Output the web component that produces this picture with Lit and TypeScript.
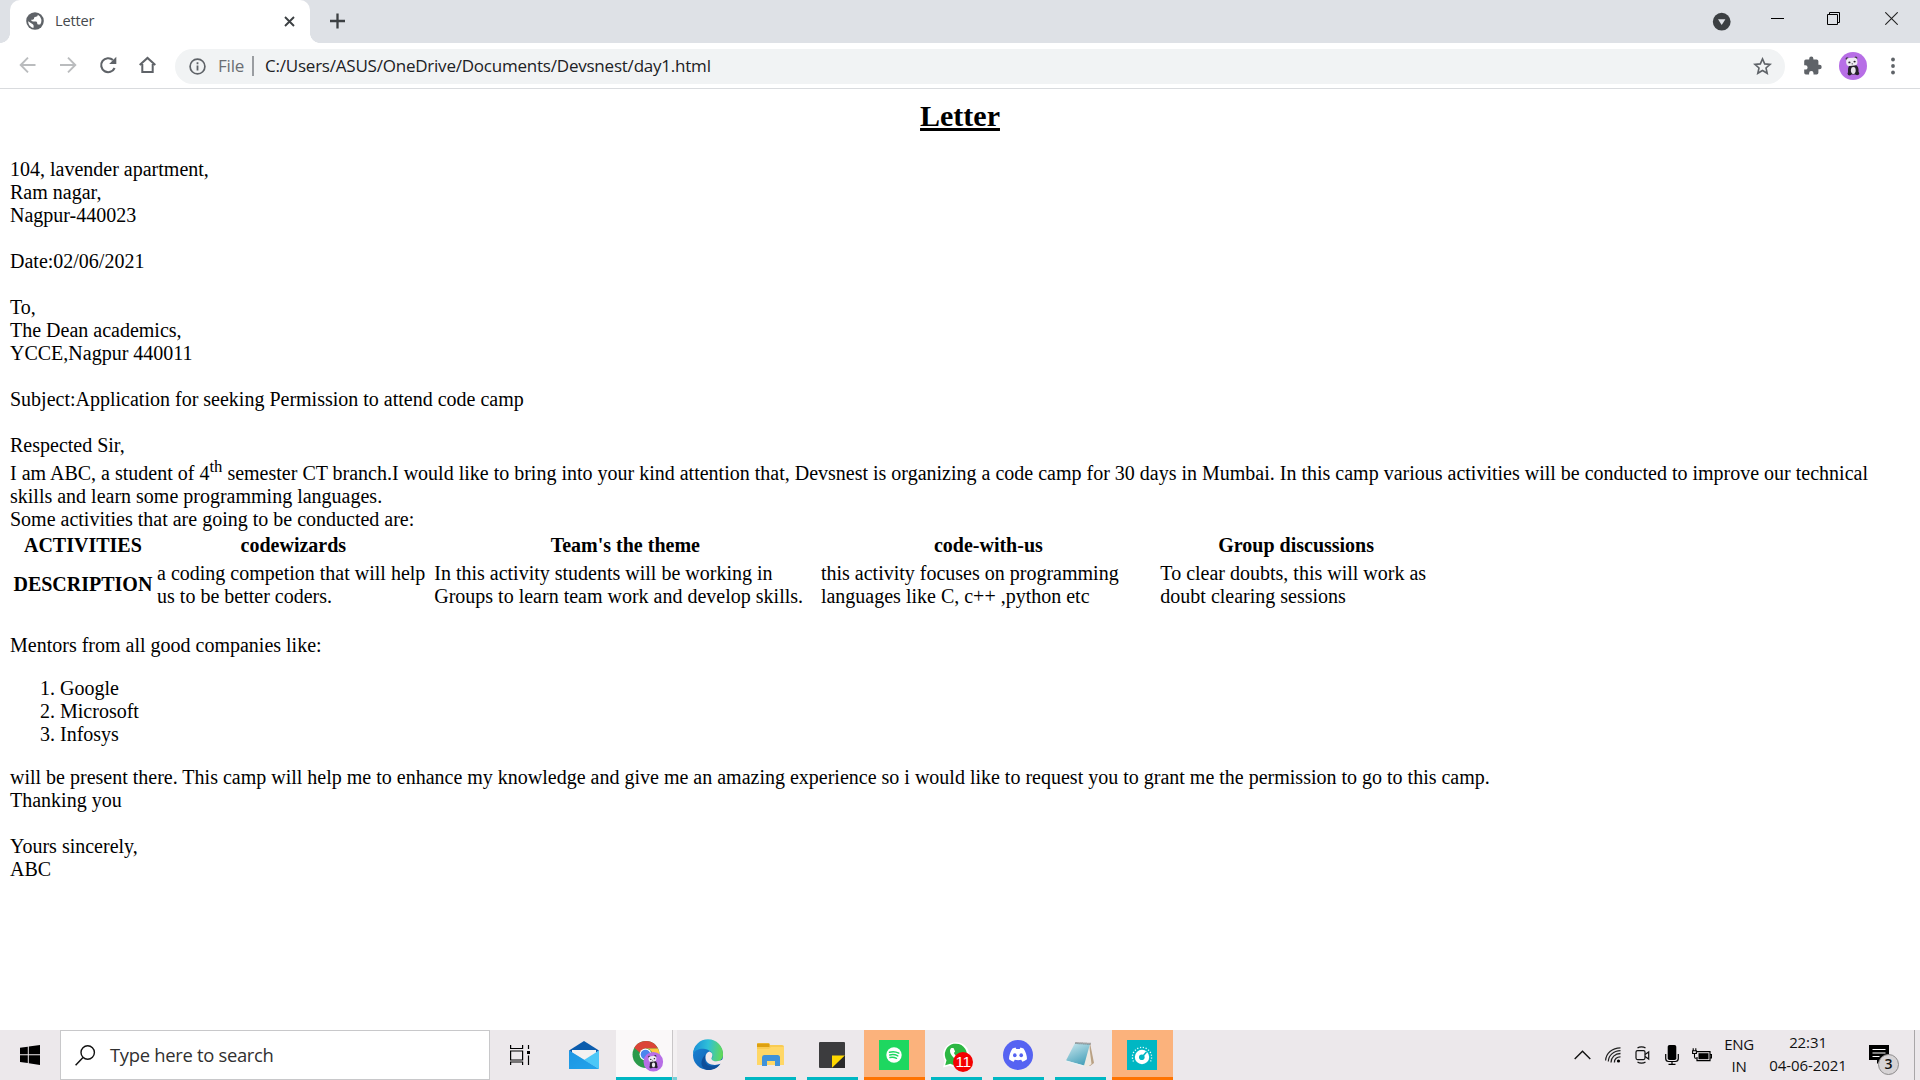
import { LitElement, html, css, svg } from "lit";
import { customElement } from "lit/decorators.js";

const icon = (w: number, h: number, body: unknown) =>
  html`<svg width=${w} height=${h} viewBox="0 0 ${w} ${h}" fill="none">${body}</svg>`;

const panda = svg`
  <circle cx="14" cy="14" r="14" fill="#b76ee6"/>
  <circle cx="8.200" cy="6.800" r="1.600" fill="#3a3340"/><circle cx="16.800" cy="6" r="1.600" fill="#3a3340"/>
  <path d="M9 18c0-3.500 1.500-5.500 5-5.500s5.500 2 5.500 5.500v4.500H9z" fill="#26222b"/>
  <ellipse cx="14.300" cy="18.500" rx="2.400" ry="3.400" fill="#e9e6ee"/>
  <circle cx="10.500" cy="21.500" r="1.900" fill="#26222b"/><circle cx="18.200" cy="21.300" r="1.900" fill="#26222b"/>
  <rect x="7.200" y="5.800" width="11.200" height="8" rx="3.400" fill="#eeebf2" transform="rotate(-5 13 10)"/>
  <ellipse cx="10.400" cy="10.400" rx="1.100" ry=".9" fill="#26222b"/><ellipse cx="15.600" cy="9.600" rx="1.100" ry=".9" fill="#26222b"/>
  <circle cx="13.200" cy="11.800" r=".6" fill="#26222b"/>`;

@customElement("browser-chrome")
export class BrowserChrome extends LitElement {
  static styles = css`
    :host { display: block; font-family: "Open Sans", "Noto Sans", sans-serif; flex: none; }
    svg { display: block; flex: none; }
    .strip { height: 43px; background: #dee1e6; display: flex; align-items: stretch; padding-left: 10px; }
    .tab { position: relative; width: 300px; box-sizing: border-box; background: #fff; border-radius: 10px 10px 0 0;
      display: flex; align-items: center; padding: 0 15px 1px 16px; }
    .tab::before, .tab::after { content: ""; position: absolute; bottom: 0; width: 10px; height: 10px; }
    .tab::before { left: -10px; background: radial-gradient(circle at 0 0, transparent 9.6px, #fff 10.2px); }
    .tab::after { right: -10px; background: radial-gradient(circle at 100% 0, transparent 9.6px, #fff 10.2px); }
    .title { margin-left: 11px; padding-bottom: 2px; font-size: 14.6px; letter-spacing: -0.2px; color: #45494d; flex: 1; }
    .plus { margin: 13px 0 0 20px; }
    .gap { flex: 1; }
    .caption { display: flex; align-items: flex-start; }
    .drop { margin: 12px 39px 0 0; }
    .min { margin: 18px 43px 0 0; }
    .max { margin: 12px 45px 0 0; }
    .close { margin: 12px 22px 0 0; }
    .toolbar { height: 45px; display: flex; align-items: center; padding-left: 19px; border-bottom: 1px solid #d9dbde; }
    .nav { display: flex; align-items: center; gap: 22px; width: 156px; padding-bottom: 1px; }
    .omni { flex: 1; height: 35px; border-radius: 18px; background: #f1f3f4; display: flex; align-items: center;
      padding: 0 13px 0 14px; font-size: 17px; color: #202124; margin-top: 1px; }
    .file { color: #6a6e73; margin-left: 12px; width: 27px; letter-spacing: -0.2px; padding-bottom: 2px; }
    .bar { width: 2px; height: 20px; background: #9a9da1; margin: 0 11px 0 7px; }
    .url { flex: 1; letter-spacing: -0.22px; white-space: nowrap; padding-bottom: 2px; }
    .tools { display: flex; align-items: center; width: 135px; box-sizing: border-box; padding-left: 18px; }
    .avatar { margin: 0 24px 0 16px; }
  `;
  render() {
    return html`
      <div class="strip">
        <div class="tab">
          ${icon(18, 18, svg`<circle cx="9" cy="9" r="8.8" fill="#5f6368"/>
            <path d="M2.2 9.2 6 11.7c1.2.8 1.6 1.1 1.6 2.2v1.9C4.600 15.400 2.100 12.600 2.200 9.200zM11.800 2.700c-.1 1.200-.6 1.900-1.900 2-1.300.1-1.900.7-1.900 1.900 0 .8-.5 1.200-1.400 1.200H5.200c0 1.200.7 1.700 1.900 1.700h2.300c1.200 0 1.800.6 1.800 1.800 0 .9.500 1.300 1.400 1.300h1.600a6.900 6.900 0 0 0-2.400-9.900z" fill="#fff"/>`)}
          <span class="title">Letter</span>
          ${icon(11, 11, svg`<path d="M1 1l9 9M10 1l-9 9" stroke="#3c4043" stroke-width="1.9"/>`)}
        </div>
        <div class="plus">${icon(15, 16, svg`<path d="M7.500 .5v15M0 8h15" stroke="#3c4043" stroke-width="2.300"/>`)}</div>
        <div class="gap"></div>
        <div class="caption">
          <div class="drop">${icon(20, 20, svg`<circle cx="9.700" cy="9.700" r="8.900" fill="#3c4043"/><path d="M6 7.300h7.400L9.700 13z" fill="#dee1e6"/>`)}</div>
          <div class="min">${icon(13, 1, svg`<path d="M0 .5h13" stroke="#000"/>`)}</div>
          <div class="max">${icon(13, 13, svg`<path d="M.5 2.500h10v10H.5zM2.500 2.500V.5h10v10h-2" stroke="#000"/>`)}</div>
          <div class="close">${icon(13, 13, svg`<path d="M.3.3l12.400 12.400M12.700.3L.3 12.700" stroke="#222" stroke-width="1.100"/>`)}</div>
        </div>
      </div>
      <div class="toolbar">
        <div class="nav">
          ${icon(18, 18, svg`<path d="M16.500 9H2M9 1.700L1.700 9 9 16.300" stroke="#babcbe" stroke-width="1.900"/>`)}
          ${icon(18, 18, svg`<path d="M1 9h14.500M9 1.700L16.300 9 9 16.300" stroke="#babcbe" stroke-width="1.900"/>`)}
          ${icon(18, 18, svg`<path d="M15.600 12A7 7 0 1 1 14 4.100" stroke="#5f6368" stroke-width="2.100"/><path d="M17.300.8v7.100h-7.100z" fill="#5f6368"/>`)}
          ${icon(18, 18, svg`<path d="M.7 9.100L8.500 1.900l7.800 7.200M3.300 8v8h10.400V8" stroke="#5f6368" stroke-width="2"/>`)}
        </div>
        <div class="omni">
          ${icon(17, 17, svg`<circle cx="8.500" cy="8.500" r="7.400" stroke="#5f6368" stroke-width="1.700"/><path d="M8.500 7.500v5M8.500 4.300v1.900" stroke="#5f6368" stroke-width="1.800"/>`)}
          <span class="file">File</span><span class="bar"></span>
          <span class="url">C:/Users/ASUS/OneDrive/Documents/Devsnest/day1.html</span>
          ${icon(19, 18, svg`<path d="M9.500 1.900l2.200 5 5.400.5-4.100 3.600 1.200 5.300-4.700-2.800-4.700 2.800L6 11 1.900 7.400l5.400-.5z" stroke="#5f6368" stroke-width="1.600"/>`)}
        </div>
        <div class="tools">
          ${icon(20, 20, svg`<path d="M1.200 5.300q0-1.700 1.700-1.700h3.300v-.9a2.100 2.100 0 0 1 4.200 0v.9h3.300q1.700 0 1.700 1.700v3.500h1.100a2.200 2.200 0 0 1 0 4.400h-1.100v3.600q0 1.700-1.700 1.700h-3.200v-1.200a2.200 2.200 0 0 0-4.400 0v1.200H2.900q-1.700 0-1.700-1.700v-3.200h1.200a2.200 2.200 0 0 0 0-4.400H1.200z" fill="#5f6368"/>`)}
          <div class="avatar">${icon(28, 28, panda)}</div>
          ${icon(4, 18, svg`<circle cx="2" cy="2.500" r="1.900" fill="#5f6368"/><circle cx="2" cy="9" r="1.900" fill="#5f6368"/><circle cx="2" cy="15.500" r="1.900" fill="#5f6368"/>`)}
        </div>
      </div>`;
  }
}

@customElement("letter-page")
export class LetterPage extends LitElement {
  static styles = css`
    :host { display: block; flex: 1; min-height: 0; overflow: hidden; box-sizing: border-box; padding: 10px; background: #fff;
      color: #000; font: 20px/23px "Liberation Serif", serif; }
    .heading { margin: 0 0 25px; font-size: 30px; line-height: 34px; text-align: center; text-decoration: underline; }
    .block { margin: 0 0 23px; }
    .body { margin: 0; }
    .sup { font-size: 16.67px; line-height: normal; vertical-align: 8px; }
    .activities { table-layout: fixed; width: 1425.200px; border-spacing: 2.5px; margin-bottom: 23px; }
    .activities th, .activities td { padding: 1.25px; }
    .c1 { width: 141.5px; } .c2 { width: 274.600px; } .c3 { width: 383.900px; } .c4 { width: 336.700px; } .c5 { width: 273.5px; }
    .mentors { margin: 20px 0; padding-left: 50px; }
  `;
  render() {
    return html`
      <h2 class="heading">Letter</h2>
      <p class="block">104, lavender apartment,<br>Ram nagar,<br>Nagpur-440023</p>
      <p class="block">Date:02/06/2021</p>
      <p class="block">To,<br>The Dean academics,<br>YCCE,Nagpur 440011</p>
      <p class="block">Subject:Application for seeking Permission to attend code camp</p>
      <p class="body">Respected Sir,<br>I am ABC, a student of 4<sup class="sup">th</sup> semester CT branch.I would like to bring into your kind attention that, Devsnest is organizing a code camp for 30 days in Mumbai. In this camp various activities will be conducted to improve our technical skills and learn some programming languages.<br>Some activities that are going to be conducted are:</p>
      <table class="activities">
        <colgroup><col class="c1"><col class="c2"><col class="c3"><col class="c4"><col class="c5"></colgroup>
        <tr><th>ACTIVITIES</th><th>codewizards</th><th>Team's the theme</th><th>code-with-us</th><th>Group discussions</th></tr>
        <tr><th>DESCRIPTION</th>
          <td>a coding competion that will help<br>us to be better coders.</td>
          <td>In this activity students will be working in<br>Groups to learn team work and develop skills.</td>
          <td>this activity focuses on programming<br>languages like C, c++ ,python etc</td>
          <td>To clear doubts, this will work as<br>doubt clearing sessions</td></tr>
      </table>
      <p class="body">Mentors from all good companies like:</p>
      <ol class="mentors"><li>Google</li><li>Microsoft</li><li>Infosys</li></ol>
      <p class="block">will be present there. This camp will help me to enhance my knowledge and give me an amazing experience so i would like to request you to grant me the permission to go to this camp.<br>Thanking you</p>
      <p class="body">Yours sincerely,<br>ABC</p>`;
  }
}

const apps = [
  { cls: "", art: svg`<defs><linearGradient id="ml" x1="0" y1="0" x2="1" y2="1"><stop stop-color="#1b8fe0"/><stop offset="1" stop-color="#2bb4f0"/></linearGradient></defs>
      <path d="M0 10.500L15 1l15 9.500-4 3H4z" fill="#0b5cad"/><path d="M3 10h24v6l-12 6L3 16z" fill="#f3f1f1"/>
      <path d="M0 10.500L30 29H0z" fill="url(#ml)"/><path d="M30 10.500L15 20l15 9z" fill="#4cc7f7"/><path d="M0 10.500L30 29H0z" fill="#1e9ae6" opacity=".6"/>` },
  { cls: "on active", art: svg`<circle cx="15" cy="14.500" r="13.500" fill="#2b9a4b"/>
      <path d="M3.300 7.800A13.500 13.500 0 0 1 27 8.500H15a6 6 0 0 0-5.800 4.600z" fill="#db4437"/>
      <path d="M27 8.500A13.500 13.500 0 0 1 15 28l5.500-10.500A6 6 0 0 0 15 8.500z" fill="#ffca3e"/>
      <circle cx="14.500" cy="14.500" r="6" fill="#fff"/><circle cx="14.500" cy="14.500" r="4.800" fill="#4b86ee"/>
      <g transform="translate(12.500 12) scale(.7)">${panda}</g>` },
  { cls: "", art: svg`<defs><linearGradient id="eg" x1="0" y1=".3" x2="1" y2=".4"><stop stop-color="#1a8fd8"/><stop offset=".5" stop-color="#2fc0d8"/><stop offset="1" stop-color="#62d957"/></linearGradient>
      <linearGradient id="eb" x1="0" y1="0" x2="1" y2="1"><stop stop-color="#1a86d8"/><stop offset="1" stop-color="#0d58a8"/></linearGradient></defs>
      <circle cx="15" cy="15" r="15" fill="url(#eb)"/>
      <path d="M0 14A15 15 0 0 1 30 14.500c0 5.500-4.500 7.500-8.500 7-3.500-.5-3.800-1.800-2.700-3.200C21 15 18.500 10 12 9 7 8.300 2 10 0 14z" fill="url(#eg)"/>
      <path d="M12 18c-1 8 8 11 16 5-3 5-8 7.500-14 7C7 28 7 20 12 15z" fill="#0e4f9a"/>
      <path d="M16.500 11.500c2.500.8 3.800 3.500 2.300 6-1.500 2.800 3 5 8.500 3l2.500-1 .5 2.500-2.500 1.800c-6 2.500-15.300 1.200-15.300-6.300 0-3 1.500-5.500 4-6z" fill="#f0e9eb"/>` },
  { cls: "on", art: svg`<path d="M2 4.500q0-1.500 1.500-1.500h10L15 5h12q2 0 2 2v16.500q0 1.500-1.500 1.500h-24Q2 25 2 23.500z" fill="#f9cb52"/>
      <path d="M2 3.500h12.500V7H2z" fill="#dda011"/><path d="M2 9h12l2-2h13v18H2z" fill="#ffd766"/>
      <path d="M7 26V17.500Q7 15 9.500 15h13q2.500 0 2.500 2.500V26h-5v-5h-8v5z" fill="#3f92da"/>` },
  { cls: "on", art: svg`<rect x="2" y="2" width="26" height="26" rx="1" fill="#3c3c3e"/><path d="M15 15.500h13L15 28z" fill="#ffd800"/><path d="M28 15.500V28H15z" fill="#2a2a2b"/>` },
  { cls: "on hot", art: svg`<rect width="30" height="30" fill="#1ed760"/><circle cx="15" cy="15" r="7.700" fill="#fff"/>
      <path d="M10.500 12.300c3-.9 6.500-.6 9.300.9M10.800 15c2.700-.7 5.500-.4 8 .9M11 17.500c2.300-.5 4.500-.2 6.500.8" stroke="#1ed760" stroke-width="1.500" stroke-linecap="round"/>` },
  { cls: "on", art: svg`<path d="M2 27.500l1.800-6.700A13 12.500 0 1 1 9 25.700z" fill="#fff"/><path d="M4.200 25.200l1.300-5A11 10.800 0 1 1 9.300 23.800z" fill="#2cb742"/>
      <path d="M10.500 8c-3 2-1 6.500 2 9.500s8 4 9.500.5l-3-2-1.800 1.300c-2-.8-3.500-2.300-4.300-4.200l1.200-1.600L12.500 8z" fill="#fff"/>
      <circle cx="22" cy="22" r="10" fill="#f40000"/>`, badge: "11" },
  { cls: "on", art: svg`<circle cx="15" cy="15" r="15" fill="#5663f2"/>
      <path d="M9.500 8.500l3-.9.800 1.400h3.400l.8-1.400 3 .9c2.200 3.200 3.500 7 3.500 10.800-1.500 1.300-3 2-4.600 2.400l-1.200-1.900c-2 .5-4.400.5-6.400 0l-1.200 1.900C9 21.300 7.500 20.600 6 19.300c0-3.800 1.300-7.600 3.500-10.800z" fill="#fff"/>
      <ellipse cx="11.800" cy="15.300" rx="1.800" ry="2" fill="#5663f2"/><ellipse cx="18.200" cy="15.300" rx="1.800" ry="2" fill="#5663f2"/>` },
  { cls: "on", art: svg`<defs><linearGradient id="np" x1="0" y1="0" x2=".5" y2="1"><stop stop-color="#cfeaf0"/><stop offset="1" stop-color="#4fa5bd"/></linearGradient></defs>
      <path d="M25 3l4 20-4 3-3-1z" fill="#b9a184"/><path d="M24 4l2.500 20-4 3L18 25z" fill="#efe9e0"/>
      <path d="M10 3l15 1-6 21.500L1 20.500z" fill="url(#np)"/><path d="M1 20.500l18 5-.4 1.400L.6 21.500z" fill="#e8f0f2"/>
      <path d="M10.500 3l15 .8" stroke="#666" stroke-width="2" stroke-dasharray="1 1"/>` },
  { cls: "on hot", art: svg`<rect width="30" height="30" fill="#00b7c3"/><circle cx="15" cy="17" r="7.200" fill="#fff"/><circle cx="14.800" cy="17.200" r="2.800" fill="#00b7c3"/>
      <path d="M15.500 16.500l4-4.500" stroke="#00b7c3" stroke-width="1.600"/>
      <path d="M6.500 21.500A9.600 9.600 0 1 1 23.500 21.500" stroke="#e6fbfc" stroke-width="1.300" stroke-dasharray="1.200 1.700"/>` },
];

@customElement("task-bar")
export class TaskBar extends LitElement {
  static styles = css`
    :host { flex: none; display: flex; height: 50px; background: #ece8eb; color: #111; font-family: "Open Sans", "Noto Sans", sans-serif; }
    svg { display: block; flex: none; overflow: visible; }
    .start { width: 60px; display: flex; align-items: center; justify-content: center; }
    .search { width: 430px; box-sizing: border-box; background: #fff; border: 1px solid #c8c8ca; display: flex; align-items: center; padding-left: 14px; gap: 15px; }
    .hint { font-size: 18.400px; letter-spacing: -0.3px; color: #303030; padding-bottom: 2px; }
    .view { width: 64px; box-sizing: border-box; display: flex; align-items: center; padding-left: 20px; }
    .apps { display: flex; }
    .app { position: relative; width: 62px; height: 50px; box-sizing: border-box; padding-left: 15px; display: flex; align-items: center; background-repeat: no-repeat; }
    .on { background-image: linear-gradient(#00b7c3, #00b7c3); background-size: 51px 3px; background-position: 5px 47px; }
    .active { background-color: #faf8f9; background-size: 62px 3px; background-position: 0 47px; width: 61px; margin-right: 1px; }
    .active::after { content: ""; position: absolute; right: 0; top: 0; width: 4px; height: 50px; border-left: 1px solid #c9c6c8; background: rgba(236, 232, 235, .5); }
    .hot { width: 61px; margin-right: 1px; background-color: #fbb27c; background-image: linear-gradient(#ff7300, #ff7300); background-size: 61px 3px; background-position: 0 47px; }
    .badge { position: absolute; left: 26px; top: 22px; width: 22px; text-align: center; color: #fff; font: 15.5px/20px "Liberation Sans", sans-serif; letter-spacing: -0.5px; }
    .gap { flex: 1; }
    .tray { display: flex; align-items: center; }
    .chev { margin-right: 14px; } .wifi { margin-right: 14px; } .cam { margin-right: 15px; } .mic { margin-right: 13px; } .bat { margin-right: 10px; }
    .stack { text-align: center; font-size: 15px; height: 50px; box-sizing: border-box; white-space: nowrap; }
    .lang { width: 34px; line-height: 22px; padding-top: 3px; letter-spacing: -0.35px; }
    .clock { width: 84px; margin-left: 10px; line-height: 23px; padding-top: 1px; letter-spacing: -0.1px; }
    .note { position: relative; width: 31px; height: 30px; margin: 10px 14px 0 19px; }
    .count { position: absolute; left: 9px; top: 9px; width: 21px; height: 21px; box-sizing: border-box; border: 1px solid #8c8a8b; border-radius: 50%; background: #d6d3d5; text-align: center; font-size: 14px; line-height: 18px; font-weight: 600; }
    .peek { width: 5px; height: 50px; border-left: 1px solid #a9a6a8; }
  `;
  render() {
    return html`
      <div class="start">${icon(20, 20, svg`<path d="M0 2.700l7.800-1v7.500H0zM8.800 1.500L20 0v9.200H8.800zM0 10.300h7.800v7.600L0 16.900zM8.800 10.300H20V20L8.800 18.300z" fill="#000"/>`)}</div>
      <div class="search">
        ${icon(20, 21, svg`<circle cx="12.700" cy="7.500" r="6.700" stroke="#111" stroke-width="1.400"/><path d="M8 12.500L.6 20.300" stroke="#111" stroke-width="1.500"/>`)}
        <span class="hint">Type here to search</span>
      </div>
      <div class="view">${icon(20, 20, svg`<path d="M.6 0v3.500h12V0M.6 6h12v9H.6zM.6 20v-3h12v3M18.500 0v4M18.500 10.500V20" stroke="#000" stroke-width="1.200"/><path d="M17 6h3v3h-3z" fill="#000"/>`)}</div>
      <div class="apps">${apps.map(a => html`<div class="app ${a.cls}">${icon(30, 30, a.art)}${a.badge ? html`<span class="badge">${a.badge}</span>` : ""}</div>`)}</div>
      <div class="gap"></div>
      <div class="tray">
        <div class="chev">${icon(17, 10, svg`<path d="M.7 9L8.500 1.200 16.300 9" stroke="#111" stroke-width="1.400"/>`)}</div>
        <div class="wifi">${icon(16, 16, svg`<circle cx="13.500" cy="14" r="1.600" fill="#000"/><path d="M9.400 15.500C9.400 12 12 9.800 15.500 9.900M6 15.500c0-5 4-9 9.500-9" stroke="#222" stroke-width="1.300"/><path d="M3.300 14.500C3.500 8.500 8.500 3.800 15.500 3.700M.6 13.500C1 6.500 7 .9 15.500.8" stroke="#222" stroke-width="1.200"/>`)}</div>
        <div class="cam">${icon(15, 18, svg`<rect x="1" y="4.600" width="9" height="9" rx="1.500" stroke="#111" stroke-width="1.200"/><path d="M10 8.500l3.700-2.500v7L10 10.500M2.500 2C4.500.5 8.500.5 10.500 2M2.500 16c2 1.500 6 1.500 8 0" stroke="#111" stroke-width="1.200"/>`)}</div>
        <div class="mic">${icon(14, 20, svg`<rect x="2.700" y="0" width="8.600" height="15" rx="1.800" fill="#000"/><path d="M.7 9v4.500q0 3 3 3h6.600q3 0 3-3V9M7 16.500v3M3.500 19.400h7" stroke="#000" stroke-width="1.200"/>`)}</div>
        <div class="bat">${icon(20, 14, svg`<path d="M5 3.600h13v9H5V9M18 6.500h1.400v3.500H18" stroke="#000" stroke-width="1.200"/><path d="M6.500 5.200h10v6h-10z" fill="#000"/><path d="M1.200.3v2M3.800.3v2M.6 2.700h3.800v2.800H.6zM2.500 5.500V9q0 1.500 2 1.500" stroke="#000" stroke-width="1.100"/>`)}</div>
        <div class="stack lang">ENG<br>IN</div>
        <div class="stack clock">22:31<br>04-06-2021</div>
        <div class="note">${icon(20, 20, svg`<path d="M0 0h20v15h-8l-4 4v-4H0z" fill="#000"/><path d="M3.500 4.500h13M3.500 8h13M3.500 11.500h7" stroke="#fff" stroke-width="1.200"/>`)}<span class="count">3</span></div>
        <div class="peek"></div>
      </div>`;
  }
}

@customElement("app-root")
export class AppRoot extends LitElement {
  static styles = css`
    :host { display: flex; flex-direction: column; height: 100vh; overflow: hidden; background: #fff; }
  `;
  render() {
    return html`<browser-chrome></browser-chrome><letter-page></letter-page><task-bar></task-bar>`;
  }
}
